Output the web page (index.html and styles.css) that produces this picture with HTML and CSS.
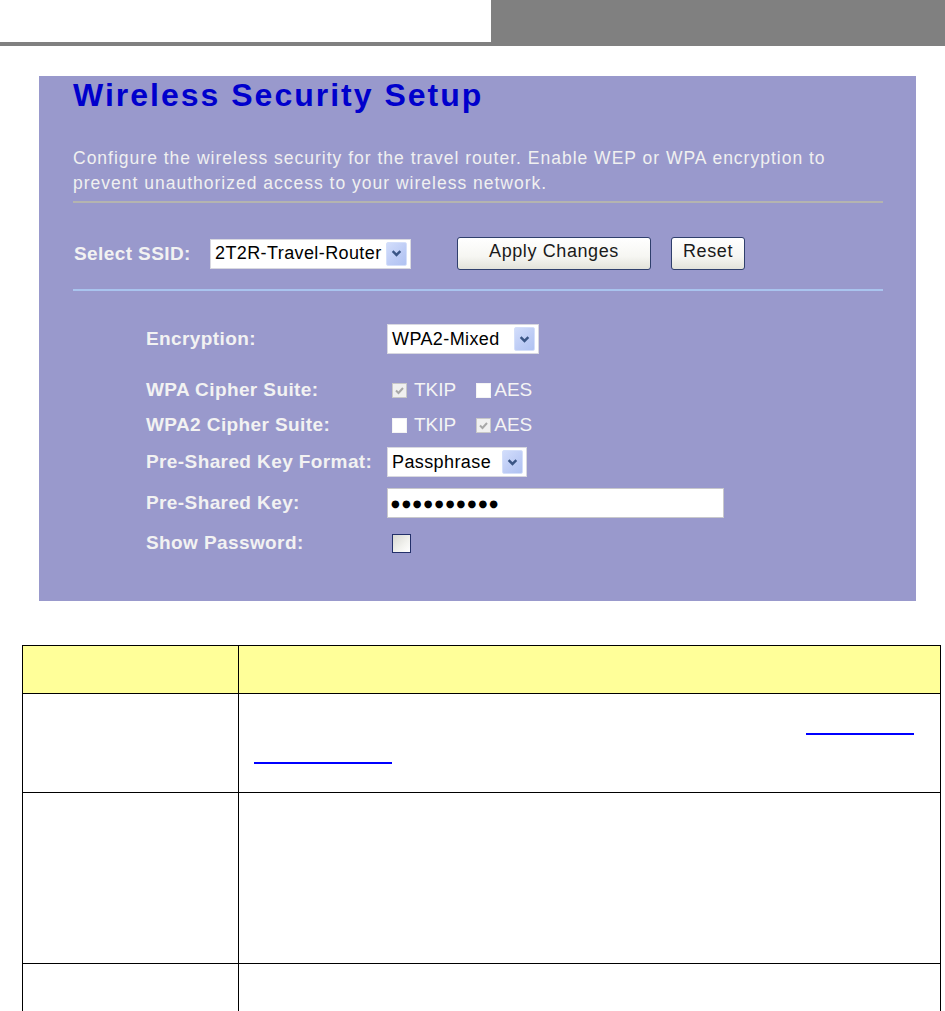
FILE: index.html
```html
<!DOCTYPE html>
<html>
<head>
<meta charset="utf-8">
<link rel="stylesheet" href="styles.css">
</head>
<body>
<div class="header">
  <div class="header-left"></div>
  <div class="header-right"></div>
</div>

<div class="panel">
  <h1 class="title">Wireless Security Setup</h1>
  <p class="desc">Configure the wireless security for the travel router. Enable WEP or WPA encryption to<br>prevent unauthorized access to your wireless network.</p>
  <div class="sep sep-gray"></div>

  <div class="ssid-row">
    <span class="label ssid-label">Select SSID:</span>
    <span class="select ssid-select"><span class="select-text">2T2R-Travel-Router</span><span class="arrow"><svg viewBox="0 0 10 8" width="11" height="9"><path d="M1.5 1.8 L5 5.3 L8.5 1.8" fill="none" stroke="#3a5585" stroke-width="2.2"/></svg></span></span>
    <button class="btn btn-apply">Apply Changes</button>
    <button class="btn btn-reset">Reset</button>
  </div>
  <div class="sep sep-blue"></div>

  <div class="form">
    <div class="row row-enc">
      <span class="label">Encryption:</span>
      <span class="select enc-select"><span class="select-text">WPA2-Mixed</span><span class="arrow"><svg viewBox="0 0 10 8" width="11" height="9"><path d="M1.5 1.8 L5 5.3 L8.5 1.8" fill="none" stroke="#3a5585" stroke-width="2.2"/></svg></span></span>
    </div>
    <div class="row row-wpa">
      <span class="label">WPA Cipher Suite:</span>
      <span class="checks">
        <span class="cb cb-dis cb-on"><svg viewBox="0 0 13 13" width="13" height="13"><path d="M3 6.5 L5.5 9 L10 4" fill="none" stroke="#a8a8a8" stroke-width="2"/></svg></span><span class="cb-text">TKIP</span>
        <span class="cb cb-dis cb-second"></span><span class="cb-text">AES</span>
      </span>
    </div>
    <div class="row row-wpa2">
      <span class="label">WPA2 Cipher Suite:</span>
      <span class="checks">
        <span class="cb cb-dis"></span><span class="cb-text">TKIP</span>
        <span class="cb cb-dis cb-on cb-second"><svg viewBox="0 0 13 13" width="13" height="13"><path d="M3 6.5 L5.5 9 L10 4" fill="none" stroke="#a8a8a8" stroke-width="2"/></svg></span><span class="cb-text">AES</span>
      </span>
    </div>
    <div class="row row-fmt">
      <span class="label">Pre-Shared Key Format:</span>
      <span class="select fmt-select"><span class="select-text">Passphrase</span><span class="arrow"><svg viewBox="0 0 10 8" width="11" height="9"><path d="M1.5 1.8 L5 5.3 L8.5 1.8" fill="none" stroke="#3a5585" stroke-width="2.2"/></svg></span></span>
    </div>
    <div class="row row-key">
      <span class="label">Pre-Shared Key:</span>
      <span class="input"><span class="dots">●●●●●●●●●●</span></span>
    </div>
    <div class="row row-show">
      <span class="label">Show Password:</span>
      <span class="cb-xp"></span>
    </div>
  </div>
</div>

<table class="spec">
  <tr class="head">
    <td class="c1"></td>
    <td class="c2"></td>
  </tr>
  <tr class="r2">
    <td class="c1"></td>
    <td class="c2">
      <div class="link-line first"><a class="link link-a">&nbsp;</a></div>
      <div class="link-line"><a class="link link-b">&nbsp;</a></div>
    </td>
  </tr>
  <tr class="r3">
    <td class="c1"></td>
    <td class="c2"></td>
  </tr>
  <tr class="r4">
    <td class="c1"></td>
    <td class="c2"></td>
  </tr>
</table>
</body>
</html>
```

FILE: styles.css
```css
html, body {
  margin: 0;
  padding: 0;
  background: #ffffff;
  font-family: "Liberation Sans", Arial, sans-serif;
}

.header {
  display: flex;
  height: 46px;
}
.header-left {
  flex: 0 0 491px;
  box-sizing: border-box;
  border-bottom: 4px solid #808080;
}
.header-right {
  flex: 1;
  background: #808080;
}

.panel {
  box-sizing: border-box;
  margin: 30px 0 0 39px;
  width: 877px;
  height: 525px;
  padding: 3px 0 0 34px;
  background: #9999cc;
  display: flex;
  flex-direction: column;
}

.title {
  margin: 0;
  font-size: 32px;
  line-height: 32px;
  font-weight: bold;
  color: #0000cc;
  letter-spacing: 2px;
}

.desc {
  margin: 35px 0 0 0;
  font-size: 17.5px;
  line-height: 25px;
  color: #f0f0f0;
  letter-spacing: 1px;
  white-space: nowrap;
}

.sep {
  width: 810px;
  height: 0;
}
.sep-gray {
  margin-top: 5px;
  border-top: 2px solid #b4b4b0;
}
.sep-blue {
  margin-top: 19px;
  border-top: 2px solid #a9c4ee;
}

.label {
  font-size: 19px;
  font-weight: bold;
  color: #f2f2f2;
  letter-spacing: 0.4px;
  white-space: nowrap;
}

.ssid-row {
  margin-top: 34px;
  height: 33px;
  display: flex;
  align-items: center;
}
.ssid-label {
  width: 136px;
  padding-left: 1px;
}

.select {
  box-sizing: border-box;
  display: inline-flex;
  align-items: center;
  justify-content: space-between;
  height: 30px;
  background: #ffffff;
  border: 1px solid #d8d8e0;
  padding: 0 3px 0 4px;
}
.select-text {
  font-size: 18px;
  color: #000000;
  white-space: nowrap;
  letter-spacing: 0.4px;
}
.arrow {
  box-sizing: border-box;
  width: 21px;
  height: 24px;
  border: 1px solid #d4dffa;
  border-radius: 2px;
  background: linear-gradient(135deg, #d2ddfb 0%, #bccbf5 60%, #b0c2f2 100%);
  display: flex;
  align-items: center;
  justify-content: center;
}
.ssid-select { width: 201px; }
.enc-select { width: 152px; }
.fmt-select { width: 140px; }

.btn {
  box-sizing: border-box;
  height: 33px;
  border: 1px solid #2f3f6c;
  border-radius: 3px;
  background: linear-gradient(#ffffff 0%, #f6f6f2 60%, #e2e2da 100%);
  font-family: "Liberation Sans", Arial, sans-serif;
  font-size: 18px;
  letter-spacing: 0.6px;
  color: #1a1a1a;
  padding: 0 0 4px 0;
}
.btn-apply {
  width: 194px;
  margin-left: 46px;
}
.btn-reset {
  width: 74px;
  margin-left: 20px;
}

.form {
  margin-left: 73px;
  margin-top: 33px;
  display: flex;
  flex-direction: column;
}
.row {
  display: flex;
  align-items: center;
}
.row .label {
  width: 241px;
}
.row-enc { height: 30px; }
.row-wpa { height: 20px; margin-top: 26px; }
.row-wpa2 { height: 20px; margin-top: 15px; }
.row-fmt { height: 30px; margin-top: 12px; }
.row-key { height: 30px; margin-top: 11px; }
.row-show { height: 20px; margin-top: 15px; }

.checks {
  display: flex;
  align-items: center;
  padding-left: 5px;
}
.cb {
  box-sizing: border-box;
  width: 15px;
  height: 15px;
  display: inline-flex;
  align-items: center;
  justify-content: center;
}
.cb-dis {
  background: #ffffff;
  border: 1px solid #f4f4f4;
}
.cb-on {
  background: #f0f0f0;
  border: 1px solid #c8c8c8;
}
.cb-second {
  margin-left: 20px;
}
.cb-text {
  font-size: 19px;
  color: #f4f4f4;
  margin-left: 7px;
  line-height: 20px;
}
.cb-second + .cb-text {
  margin-left: 3px;
}

.input {
  box-sizing: border-box;
  width: 337px;
  height: 30px;
  background: #ffffff;
  border: 1px solid #c8c8cc;
  display: flex;
  align-items: center;
  padding-left: 3px;
}
.dots {
  font-family: "DejaVu Sans", sans-serif;
  font-size: 10px;
  letter-spacing: 2.2px;
  color: #000000;
}

.cb-xp {
  box-sizing: border-box;
  width: 19px;
  height: 19px;
  margin-left: 5px;
  border: 1px solid #23306a;
  background: linear-gradient(135deg, #d8d8d2 0%, #f2f2ee 60%, #ffffff 100%);
}

.spec {
  margin: 44px 0 0 22px;
  width: 919px;
  border-collapse: collapse;
  table-layout: fixed;
}
.spec td {
  border: 1px solid #000000;
  padding: 0;
  vertical-align: top;
}
.spec .c1 { width: 215px; }
.spec .head td { background: #ffff99; height: 47px; }
.spec .r2 td { height: 98px; }
.spec .r3 td { height: 170px; }
.spec .r4 td { height: 47px; }

.link-line {
  display: flex;
  width: 660px;
  margin-left: 15px;
}
.link-line.first {
  margin-top: 17px;
  justify-content: flex-end;
}
.link-line + .link-line {
  margin-top: 5px;
}
.link {
  display: inline-block;
  height: 22px;
  border-bottom: 2px solid #0000ff;
  color: #0000ff;
}
.link-a { width: 108px; }
.link-b { width: 138px; }
```
